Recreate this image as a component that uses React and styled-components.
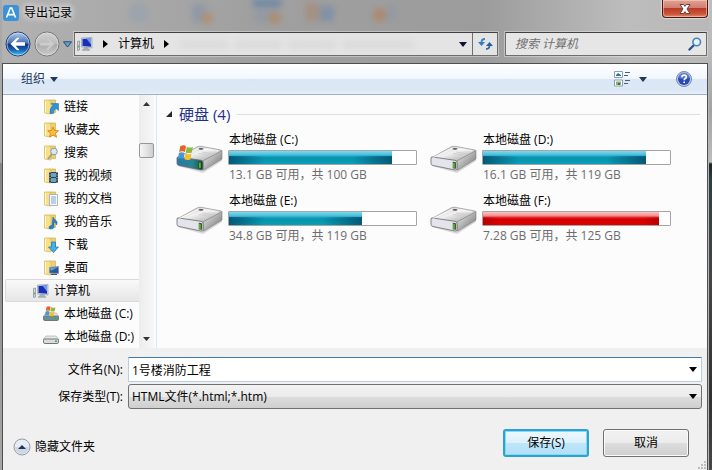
import React, { useState } from "react";
import styled, { createGlobalStyle } from "styled-components";

const GlobalStyle = createGlobalStyle`
  * {
    box-sizing: border-box;
  }

  body {
    margin: 0;
  }

  body,
  button,
  input,
  select {
    font-family: "Open Sans", "Noto Sans CJK SC", sans-serif;
    font-size: 12px;
    line-height: 16px;
    color: #000;
  }

  button {
    padding: 0;
    border: none;
    background: none;
  }

  svg {
    display: block;
    flex: none;
  }
`;

const Desktop = styled.div`
  position: relative;
  min-height: 100vh;
  display: flex;
  flex-direction: column;
  padding: 0 4px 0 2px;
  background:
    linear-gradient(#bcbcbc 0 50px, #a2a2a2 110px, #bdbdbd 162px, #1d2424 164px, #2b4040 180px, #454545 280px, #303030 400px, #474747) right / 3px 100% no-repeat,
    linear-gradient(#a9a9a9 0 162px, #858585 164px, #a6a6a6) left / 2px 100% no-repeat,
    linear-gradient(90deg, #b2b2b2, #a0a0a0 35%, #9c9c9c 68%, #bdbdbd 88%, #b8b8b8);
`;

const Glass = styled.svg`
  position: absolute;
  top: 0;
  left: 0;
  filter: blur(3px);
`;

const TitleBar = styled.header`
  position: relative;
  display: flex;
  align-items: flex-start;
  gap: 5px;
  height: 32px;
  padding: 5px 0 0 1px;
`;

const Title = styled.h1`
  flex: 1;
  margin: 0;
  font-size: 12px;
  font-weight: normal;
  text-shadow: 0 0 6px #fff, 0 0 8px #fff;
`;

const CloseButton = styled.button`
  width: 46px;
  height: 18px;
  margin-top: -5px;
  display: flex;
  align-items: center;
  justify-content: center;
  border: 1px solid #4c1712;
  border-top: none;
  border-radius: 0 0 4px 4px;
  background: linear-gradient(#e0a293, #d08070 45%, #b93c26 50%, #cb5238 80%, #e08a66);
  box-shadow: inset 0 0 0 1px rgba(255, 220, 205, 0.5), 0 0 1px 1px rgba(255, 255, 255, 0.5);
`;

const AddressRow = styled.div`
  position: relative;
  display: flex;
  gap: 7px;
  height: 31px;
  padding: 0 1px 7px 3px;
`;

const NavButtons = styled.div`
  display: flex;
  align-items: center;
  gap: 3px;
  width: 62px;
`;

const AddressBar = styled.nav`
  flex: 1;
  display: flex;
  align-items: center;
  padding-left: 2px;
  border: 1px solid #6e6e6e;
  border-top-color: #404040;
  background: #e4e4e4;
  box-shadow: 0 0 0 1px rgba(255, 255, 255, 0.35);
`;

const Trail = styled.div`
  display: flex;
  align-items: center;
  gap: 10px;
`;

const Crumb = styled.a`
  color: #000;
  text-decoration: none;
`;

const Smudges = styled.div`
  flex: 1;
  display: flex;
  gap: 8px;
  padding-left: 12px;
  filter: blur(3px);
`;

const Smudge = styled.span`
  width: ${(props) => props.$width}px;
  height: 7px;
  background: #d9d9d9;
`;

const RefreshButton = styled.button`
  width: 25px;
  height: 100%;
  margin-left: 5px;
  display: flex;
  align-items: center;
  justify-content: center;
  border-left: 1px solid #6e6e6e;
`;

const SearchBox = styled.div`
  width: 202px;
  display: flex;
  align-items: center;
  padding: 0 4px 0 9px;
  border: 1px solid #6e6e6e;
  border-top-color: #404040;
  background: #e6e6e6;
  box-shadow: 0 0 0 1px rgba(255, 255, 255, 0.35);
`;

const SearchInput = styled.input`
  flex: 1;
  min-width: 0;
  padding: 0;
  border: none;
  outline: none;
  background: none;

  &::placeholder {
    color: #6f6f6f;
    font-style: italic;
    opacity: 1;
  }
`;

const Body = styled.div`
  flex: 1;
  display: flex;
  flex-direction: column;
  border: 1px solid #4f4f4f;
  border-bottom: none;
  background: #f0f0f0;
`;

const Toolbar = styled.div`
  display: flex;
  align-items: center;
  height: 31px;
  padding: 0 15px 0 18px;
  border-bottom: 1px solid #a0afc3;
  background: linear-gradient(#fff, #f2f7fe 48%, #dce7f5 50%, #dde8f6 90%, #e8f0fa);
`;

const ToolButton = styled.button`
  display: flex;
  align-items: center;
  gap: ${(props) => props.$gap}px;
  margin-right: ${(props) => (props.$push ? "auto" : "29px")};
  color: #1e395b;
`;

const Explorer = styled.div`
  display: flex;
  background: #fcfcfc;
`;

const Sidebar = styled.ul`
  width: 136px;
  margin: 0;
  padding: 0;
  list-style: none;
  overflow: hidden;
`;

const TreeItem = styled.li`
  display: flex;
  align-items: center;
  gap: 5px;
  height: 23px;
  margin-left: 2px;
  padding-left: ${(props) => (props.$root ? 27 : 37)}px;
  border: 1px solid ${(props) => (props.$root ? "#dadada" : "transparent")};
  border-right: none;
  border-radius: 2px 0 0 2px;
  background: ${(props) => (props.$root ? "linear-gradient(#f9f9f9, #e6e6e6)" : "none")};
  white-space: nowrap;
`;

const ScrollTrack = styled.div`
  width: 18px;
  display: flex;
  flex-direction: column;
  align-items: center;
  padding: 7px 2px 7px 0;
  border-right: 1px solid #d9e8f3;
  background: linear-gradient(90deg, #ececec, #f6f6f6 14px, #fcfcfc 16px);
`;

const ScrollThumb = styled.div`
  width: 15px;
  height: 15px;
  margin: 37px 0 auto;
  border: 1px solid #979797;
  border-radius: 2px;
  background: linear-gradient(90deg, #f6f6f6, #e3e3e3 50%, #cfcfcf);
`;

const Main = styled.main`
  flex: 1;
  padding: 11px 7px 0 9px;
`;

const GroupHeader = styled.div`
  display: flex;
  align-items: center;
  gap: 7px;
  height: 16px;
`;

const GroupTitle = styled.h2`
  margin: 0;
  font-size: 15px;
  font-weight: normal;
  color: #1e3287;
`;

const GroupLine = styled.div`
  flex: 1;
  height: 1px;
  background: #dedede;
`;

const DriveGrid = styled.div`
  display: grid;
  grid-template-columns: repeat(auto-fill, 241px);
  gap: 10px 13px;
  padding: 10px 0 0 10px;
`;

const Drive = styled.div`
  display: flex;
  align-items: center;
  gap: 4px;
  height: 51px;
`;

const DriveInfo = styled.div`
  flex: 1;
  display: flex;
  flex-direction: column;
  gap: 2px;
  white-space: nowrap;
`;

const DriveName = styled.div`
  padding-left: 1px;
`;

const DriveSpace = styled.div`
  padding-left: 1px;
  color: #6d6d6d;
`;

const Meter = styled.div`
  height: 15px;
  border: 1px solid #a5a5a5;
  border-radius: 1px;
  background: #fff;
`;

const MeterFill = styled.div`
  height: 13px;
  background: ${(props) =>
    props.$full
      ? "linear-gradient(90deg, rgba(130, 0, 0, 0.35), transparent 16px calc(100% - 16px), rgba(130, 0, 0, 0.35)) 0 5px no-repeat, linear-gradient(#fbc4c4, #f28a8a 4px, #e23a3a 5px, #d80000 7px, #dc0000)"
      : "linear-gradient(90deg, rgba(0, 45, 80, 0.6), transparent 36px calc(100% - 40px), rgba(0, 45, 80, 0.6)) 0 5px no-repeat, linear-gradient(#7fd8ec, #45bdd9 4px, #23a7c4 5px, #0692ad 7px, #0aa0b8)"};
`;

const Footer = styled.form`
  position: relative;
  flex: 1;
  padding: 9px 5px 13px 15px;
`;

const Fields = styled.div`
  display: grid;
  grid-template-columns: 105px 1fr;
  align-items: center;
  gap: 2px 5px;
`;

const Label = styled.label`
  text-align: right;
`;

const Combo = styled.div`
  position: relative;
  display: flex;
  align-items: center;
  height: 25px;
  border: 1px solid ${(props) => (props.$select ? "#707070" : "#b5cfe7")};
  border-top-color: ${(props) => (props.$select ? "#707070" : "#3d7bad")};
  border-radius: ${(props) => (props.$select ? 3 : 1)}px;
  background: ${(props) =>
    props.$select ? "linear-gradient(#f2f2f2, #ebebeb 50%, #dddddd 50%, #cfcfcf)" : "#fff"};
`;

const FileInput = styled.input`
  flex: 1;
  min-width: 0;
  height: 100%;
  padding: 0 3px;
  border: none;
  outline: none;
  background: none;
`;

const TypeSelect = styled.select`
  flex: 1;
  min-width: 0;
  height: 100%;
  padding: 0 3px;
  border: none;
  outline: none;
  background: none;
  appearance: none;
`;

const ComboArrow = styled.span`
  position: absolute;
  right: 4px;
  pointer-events: none;
`;

const Actions = styled.div`
  display: flex;
  align-items: center;
  gap: 14px;
  padding: 20px 13px 0 0;
`;

const HideFolders = styled.button`
  display: flex;
  align-items: center;
  gap: 4px;
  margin: 8px auto 0 -5px;
`;

const PushButton = styled.button`
  width: 86px;
  height: 28px;
  border: ${(props) => (props.$primary ? "2px solid #2fa0cf" : "1px solid #707070")};
  border-radius: 3px;
  background: ${(props) =>
    props.$primary
      ? "linear-gradient(#eef8fd, #dcf1fc 50%, #bfe5fa 50%, #b0e0f8)"
      : "linear-gradient(#f2f2f2, #ebebeb 50%, #dddddd 50%, #cfcfcf)"};
  box-shadow: inset 0 0 0 1px ${(props) => (props.$primary ? "#7fdcf7" : "#fbfbfb")};
`;

const Grip = styled.svg`
  position: absolute;
  right: 1px;
  bottom: 1px;
`;

const Arrow = ({ color = "#000", right }) =>
  right ? (
    <svg width="5" height="8" viewBox="0 0 5 8">
      <path d="M0 0l5 4-5 4z" fill={color} />
    </svg>
  ) : (
    <svg width="8" height="5" viewBox="0 0 8 5">
      <path d="M0 0h8L4 5z" fill={color} />
    </svg>
  );

const AppLogo = () => (
  <svg width="16" height="16" viewBox="0 0 16 16">
    <rect width="16" height="16" rx="3" fill="#3a93d8" />
    <path d="M3.5 12.5L7.3 3h1.4l3.8 9.5M5 9.6h6" fill="none" stroke="#fff" strokeWidth="1.6" />
  </svg>
);

const CloseIcon = () => (
  <svg width="14" height="12" viewBox="0 0 14 12">
    <path
      d="M2 1.5h3.6L7 3.4l1.4-1.9H12L9 6l3 4.5H8.4L7 8.6l-1.4 1.9H2L5 6z"
      fill="#fff"
      stroke="#59463f"
    />
  </svg>
);

const BackIcon = () => (
  <svg width="26" height="26" viewBox="0 0 26 26">
    <defs>
      <linearGradient id="back" x2="0" y2="1">
        <stop offset="0" stopColor="#b7cdec" />
        <stop offset=".47" stopColor="#466fb4" />
        <stop offset=".5" stopColor="#0f3384" />
        <stop offset=".75" stopColor="#1762b6" />
        <stop offset="1" stopColor="#4ed0f8" />
      </linearGradient>
    </defs>
    <circle cx="13" cy="13" r="12" fill="url(#back)" stroke="#27406b" />
    <circle cx="13" cy="13" r="11" fill="none" stroke="#d4e6fa" strokeOpacity=".6" />
    <path d="M5.5 13l6.5-6.2h2.6l-3.9 4.5H20v3.4h-9.3l3.9 4.5H12z" fill="#fff" />
  </svg>
);

const ForwardIcon = () => (
  <svg width="26" height="26" viewBox="0 0 26 26">
    <defs>
      <linearGradient id="forward" x2="0" y2="1">
        <stop offset="0" stopColor="#d2d2d2" />
        <stop offset=".48" stopColor="#bcbcbc" />
        <stop offset=".5" stopColor="#a9a9a9" />
        <stop offset="1" stopColor="#cdcdcd" />
      </linearGradient>
    </defs>
    <circle cx="13" cy="13" r="12" fill="url(#forward)" stroke="#757575" />
    <circle cx="13" cy="13" r="11" fill="none" stroke="#e2e2e2" strokeOpacity=".7" />
    <path
      d="M20.5 13L14 6.800h-2.600l3.900 4.500H6v3.400h9.300l-3.900 4.500H14z"
      fill="#cdcdcd"
      stroke="#bababa"
      strokeWidth=".6"
    />
  </svg>
);

const HistoryIcon = () => (
  <svg width="9" height="7" viewBox="0 0 9 7">
    <path d="M.5.8h8L4.500 6z" fill="#5fa6d8" stroke="#234b73" />
  </svg>
);

const ComputerIcon = () => (
  <svg width="16" height="16" viewBox="0 0 16 16">
    <path d="M.5 5.500l2-.5v9l-2 .5z" fill="#d6dade" stroke="#7f8890" strokeWidth=".7" />
    <path d="M1 9.500h1v2H1z" fill="#57b838" />
    <path d="M7 11h4l1 2.500H6z" fill="#a8b0b8" />
    <path d="M5 13.500h8v1H5z" fill="#818b95" />
    <path d="M4.500 2l10.500-.5V12l-10.500-1z" fill="#cfd5dc" stroke="#8c97a5" strokeWidth=".6" />
    <path d="M5.500 3l8.500-.5v8.300l-8.500-.8z" fill="#1631b8" />
    <path d="M9.500 2.800l4.500-.3v6z" fill="#6f99f2" />
  </svg>
);

const RefreshIcon = () => (
  <svg width="15" height="14" viewBox="0 0 15 14">
    <path d="M7 2Q3.500 2 3.500 5.500" fill="none" stroke="#3187c4" strokeWidth="1.800" />
    <path d="M0 5h7L3.500 9z" fill="#2c7fbe" />
    <path d="M8 12q3.500 0 3.500-3.500" fill="none" stroke="#2d6ca8" strokeWidth="1.800" />
    <path d="M8 9h7L11.500 5z" fill="#245f9c" />
  </svg>
);

const SearchIcon = () => (
  <svg width="14" height="14" viewBox="0 0 14 14">
    <path d="M6 8l-4.500 4.500" stroke="#28538f" strokeWidth="2.400" strokeLinecap="round" />
    <circle cx="8.700" cy="5" r="3.800" fill="#e6f1f9" stroke="#4285bd" strokeWidth="1.600" />
  </svg>
);

const ViewIcon = () => (
  <svg width="17" height="16" viewBox="0 0 17 16">
    <path d="M.5.5h8v6h-8zM.5 9h8v6h-8z" fill="#fff" stroke="#8aa0b0" />
    <path d="M2 4l2-2 3 2v1H2z" fill="#2677a4" />
    <path d="M2 10.500h5V14H2z" fill="#8cb26a" />
    <path d="M4 12h2v2H4z" fill="#3e6f3b" />
    <path d="M11 1.500h5M10 4.500h4M11 9.500h5M10 12.500h4" stroke="#4c6078" />
  </svg>
);

const HelpIcon = () => (
  <svg width="16" height="16" viewBox="0 0 16 16">
    <circle cx="8" cy="8" r="7.500" fill="#c3cfe8" stroke="#7686ac" />
    <circle cx="8" cy="8" r="6" fill="#2848b4" />
    <path d="M2.500 7a5.500 5.500 0 0 1 11 0q-5 2-11 0z" fill="#6d8bda" opacity=".7" />
    <path
      d="M5.800 6.300q.1-2.200 2.300-2.200t2.200 1.900q0 1-1.200 1.700-.9.600-.9 1.500M8.200 10.400v1.700"
      fill="none"
      stroke="#fff"
      strokeWidth="1.600"
    />
  </svg>
);

const badges = {
  link: (
    <path
      d="M7 14.5q-.5-5.500 3-8L8 4.500h7.500v7L13 9.500q-2.500 1.500-2.500 5z"
      fill="#2b93d8"
      stroke="#1865a5"
      strokeWidth=".5"
    />
  ),
  star: (
    <path
      d="M10 5l1.500 3.500 4 .3-3 2.500 1 4-3.500-2.200L6.500 15l1-3.700-2.700-2.500 3.700-.3z"
      fill="#fbbd3c"
      stroke="#d67c16"
      strokeWidth=".8"
    />
  ),
  search: (
    <>
      <path d="M9 9l-4 5" stroke="#a29a8c" strokeWidth="1.800" />
      <circle cx="11" cy="6.500" r="3.300" fill="#dce9f1" stroke="#8d9aa4" />
    </>
  ),
  video: (
    <>
      <path d="M6 4h9v11H6z" fill="#35414f" />
      <path d="M8 5h5v4H8zM8 10h5v4H8z" fill="#64a5c6" />
      <path d="M7 4v11M14 4v11" stroke="#e2e2e2" strokeDasharray="1 1.500" strokeWidth=".9" />
    </>
  ),
  doc: (
    <>
      <path d="M6.500 3.500h8v11h-8z" fill="#f6f9fc" stroke="#95a8bb" strokeWidth=".8" />
      <path d="M8 6h5M8 8h5M8 10h5M8 12h5" stroke="#6b93c4" strokeWidth=".8" />
    </>
  ),
  music: (
    <path
      d="M10 3q.5 2.500 3 3.500 2 1.500.5 4.500 0-2.500-2.500-3v5q-.5 2-3 2t-2-2q.5-1.500 3-1.500z"
      fill="#2285d2"
      stroke="#175b9b"
      strokeWidth=".5"
    />
  ),
  download: (
    <path d="M8.500 5h4v5h3l-5 5.500L5.500 10h3z" fill="#40b1ed" stroke="#1b72ab" strokeWidth=".7" />
  ),
  desktop: (
    <>
      <path d="M6.500 7.500l9-1v7l-9-.5z" fill="#27599b" stroke="#7f94ab" strokeWidth=".8" />
      <path d="M7 8l8-1-7 4z" fill="#649fd7" />
      <path d="M8 14.500h6" stroke="#48566a" />
    </>
  ),
};

const FolderIcon = ({ badge }) => (
  <svg width="16" height="16" viewBox="0 0 16 16">
    <path d="M6 1h6.500v12.500H6z" fill="#ecd074" stroke="#d2b04c" strokeWidth=".7" />
    <path d="M1.500 1H6l2 1.500V15l-6.500-1z" fill="#f7e08c" stroke="#d6b552" strokeWidth=".7" />
    <path d="M2.500 2v11.500" stroke="#fff8d2" />
    {badges[badge]}
  </svg>
);

const Flag = ({ transform }) => (
  <g transform={transform}>
    <path d="M2 1q3-1.500 5 0L6 6Q4 5 1 6z" fill="#e5622b" />
    <path d="M7.700 1.500q3 1.500 5.300 0l-1 5q-3 1-5.300-.3z" fill="#8cbb3c" />
    <path d="M.8 6.800q3-1 5 .2l-1 5Q2.500 11 0 12z" fill="#4798d5" />
    <path d="M6.500 7.200q3 1.300 5.300.3l-1 5q-3 1-5.300-.3z" fill="#f6bd31" />
  </g>
);

const SmallDriveIcon = ({ system }) => (
  <svg width="16" height="16" viewBox="0 0 16 16">
    <path d="M3 7h10l3 3.500H0z" fill="#e6e8e8" stroke="#9ea3a4" strokeWidth=".6" />
    <rect x=".5" y="10" width="15" height="4.500" rx="1.300" fill={system ? "#6a9196" : "#d9dcdc"} stroke="#717879" />
    <path d="M12 11.500h2V13h-2z" fill="#42aa37" />
    {system && <Flag transform="translate(2) scale(.8)" />}
  </svg>
);

const DriveIcon = ({ system }) => (
  <svg width="48" height="32" viewBox="0 0 48 32">
    <defs>
      <linearGradient id="driveTop" x2="1" y2="1">
        <stop offset="0" stopColor="#bcbcbc" />
        <stop offset=".45" stopColor="#f1f1f1" />
        <stop offset="1" stopColor="#9b9b9b" />
      </linearGradient>
      <linearGradient id="driveSide" x2="1" y2="1">
        <stop offset="0" stopColor="#f4f4f4" />
        <stop offset="1" stopColor="#696969" />
      </linearGradient>
      <linearGradient id="driveFront" x2="1">
        <stop offset="0" stopColor="#2879a8" />
        <stop offset=".6" stopColor="#2a8490" />
        <stop offset="1" stopColor="#165343" />
      </linearGradient>
    </defs>
    <path d="M2 24l25 7 19-12v-5z" fill="#999" opacity=".35" />
    <path
      d="M1 16L21 5q2-1 4-.7L45 8q1.500.5 0 1.500L27 19z"
      fill="url(#driveTop)"
      stroke="#909090"
      strokeWidth=".7"
    />
    <path
      d="M27 19L46 8.500V17L28 28q-1 .5-1-1z"
      fill="url(#driveSide)"
      stroke="#828282"
      strokeWidth=".6"
    />
    <path
      d="M1 16q0-1.500 2-1l22 3.300q2 .5 2 2.200v6q0 2-2 1.500L3 23.500q-2-.5-2-2z"
      fill={system ? "url(#driveFront)" : "#e3e4ec"}
      stroke="#6b6b6b"
      strokeWidth=".8"
    />
    <path d="M3 15.500L22 6.500l20 2.500" fill="none" stroke="#fff" strokeOpacity=".7" />
    <ellipse cx="25" cy="6.800" rx="2.500" ry=".9" fill="#555" />
    <path d="M23 11.500l12 2M26 10l11 1.800" stroke="#c9c9c9" strokeWidth=".8" />
    <path d="M22.800 19.800l3 .5v6.500l-3-.6z" fill="#173a18" />
    <path d="M23.300 20.500l1.300.2v5.200l-1.300-.2z" fill="#80e62f" />
    {system && <Flag transform="translate(2 3) scale(1.150)" />}
  </svg>
);

const HideIcon = () => (
  <svg width="18" height="18" viewBox="0 0 18 18">
    <circle cx="9" cy="9" r="8" fill="#e6ecf3" stroke="#929daa" />
    <path d="M2 9a7 7 0 0 0 14 0z" fill="#cdd8e5" />
    <path d="M5 11l4-4 4 4z" fill="#1f3656" />
  </svg>
);

const folders = [
  { name: "链接", badge: "link" },
  { name: "收藏夹", badge: "star" },
  { name: "搜索", badge: "search" },
  { name: "我的视频", badge: "video" },
  { name: "我的文档", badge: "doc" },
  { name: "我的音乐", badge: "music" },
  { name: "下载", badge: "download" },
  { name: "桌面", badge: "desktop" },
];

const drives = [
  { letter: "C", free: "13.1", total: 100, used: 87, system: true },
  { letter: "D", free: "16.1", total: 119, used: 87 },
  { letter: "E", free: "34.8", total: 119, used: 71 },
  { letter: "F", free: "7.28", total: 125, used: 94 },
];

const App = () => {
  const [fileName, setFileName] = useState("1号楼消防工程");

  return (
    <>
      <GlobalStyle />
      <Desktop>
        {/* blurred toolbar icons behind the glass frame */}
        <Glass width="420" height="30" opacity=".75">
          <path d="M253 0h28v6h-28z" fill="#4f7ba5" />
          <path d="M254 8h24v15h-24z" fill="#9298a4" />
          <circle cx="275" cy="18" r="6" fill="#b3855f" />
          <path d="M305 3h14v18h-14z" fill="#a58d7c" />
          <path d="M320 6h14v15h-14z" fill="#778caa" />
          <circle cx="380" cy="15" r="7" fill="#b08263" />
          <path d="M388 4h8v18h-8z" fill="#8e99a6" />
          <circle cx="139" cy="13" r="10" fill="#98a2ae" />
          <path d="M192 4h14v18h-14z" fill="#8995aa" />
          <circle cx="207" cy="18" r="6" fill="#b38a66" />
        </Glass>

        <TitleBar>
          <AppLogo />
          <Title>导出记录</Title>
          <CloseButton aria-label="关闭">
            <CloseIcon />
          </CloseButton>
        </TitleBar>

        <AddressRow>
          <NavButtons>
            <button aria-label="后退">
              <BackIcon />
            </button>
            <button aria-label="前进">
              <ForwardIcon />
            </button>
            <button aria-label="最近位置">
              <HistoryIcon />
            </button>
          </NavButtons>
          <AddressBar>
            <Trail>
              <ComputerIcon />
              <Arrow right />
              <Crumb href="#computer">计算机</Crumb>
              <Arrow right />
            </Trail>
            <Smudges>
              <Smudge $width={46} />
              <Smudge $width={46} />
              <Smudge $width={46} />
              <Smudge $width={70} />
            </Smudges>
            <Arrow color="#101038" />
            <RefreshButton aria-label="刷新">
              <RefreshIcon />
            </RefreshButton>
          </AddressBar>
          <SearchBox>
            <SearchInput aria-label="搜索" placeholder="搜索 计算机" />
            <SearchIcon />
          </SearchBox>
        </AddressRow>

        <Body>
          <Toolbar>
            <ToolButton $push $gap={5}>
              组织
              <Arrow color="#1e395b" />
            </ToolButton>
            <ToolButton $gap={8} aria-label="视图">
              <ViewIcon />
              <Arrow color="#1e395b" />
            </ToolButton>
            <button aria-label="帮助">
              <HelpIcon />
            </button>
          </Toolbar>

          <Explorer>
            <Sidebar>
              {folders.map((folder) => (
                <TreeItem key={folder.name}>
                  <FolderIcon badge={folder.badge} />
                  {folder.name}
                </TreeItem>
              ))}
              <TreeItem $root>
                <ComputerIcon />
                计算机
              </TreeItem>
              <TreeItem>
                <SmallDriveIcon system />
                本地磁盘 (C:)
              </TreeItem>
              <TreeItem>
                <SmallDriveIcon />
                本地磁盘 (D:)
              </TreeItem>
            </Sidebar>
            <ScrollTrack>
              <svg width="7" height="4" viewBox="0 0 7 4">
                <path d="M0 4l3.500-4L7 4z" fill="#333" />
              </svg>
              <ScrollThumb />
              <svg width="7" height="4" viewBox="0 0 7 4">
                <path d="M0 0h7L3.500 4z" fill="#333" />
              </svg>
            </ScrollTrack>

            <Main>
              <GroupHeader>
                <svg width="6" height="6" viewBox="0 0 6 6">
                  <path d="M6 0v6H0z" fill="#262626" />
                </svg>
                <GroupTitle>硬盘 (4)</GroupTitle>
                <GroupLine />
              </GroupHeader>
              <DriveGrid>
                {drives.map((drive) => (
                  <Drive key={drive.letter}>
                    <DriveIcon system={drive.system} />
                    <DriveInfo>
                      <DriveName>本地磁盘 ({drive.letter}:)</DriveName>
                      <Meter>
                        <MeterFill $full={drive.used > 90} style={{ width: `${drive.used}%` }} />
                      </Meter>
                      <DriveSpace>
                        {drive.free} GB 可用，共 {drive.total} GB
                      </DriveSpace>
                    </DriveInfo>
                  </Drive>
                ))}
              </DriveGrid>
            </Main>
          </Explorer>

          <Footer onSubmit={(event) => event.preventDefault()}>
            <Fields>
              <Label htmlFor="fileName">文件名(N):</Label>
              <Combo>
                <FileInput
                  id="fileName"
                  value={fileName}
                  onChange={(event) => setFileName(event.target.value)}
                />
                <ComboArrow>
                  <Arrow />
                </ComboArrow>
              </Combo>
              <Label htmlFor="fileType">保存类型(T):</Label>
              <Combo $select>
                <TypeSelect id="fileType">
                  <option>HTML文件(*.html;*.htm)</option>
                </TypeSelect>
                <ComboArrow>
                  <Arrow />
                </ComboArrow>
              </Combo>
            </Fields>
            <Actions>
              <HideFolders type="button">
                <HideIcon />
                隐藏文件夹
              </HideFolders>
              <PushButton type="submit" $primary>
                保存(S)
              </PushButton>
              <PushButton type="button">取消</PushButton>
            </Actions>
            <Grip width="9" height="9" viewBox="0 0 9 9">
              <path d="M7 1h2v2H7zM4 4h2v2H4zM7 4h2v2H7zM1 7h2v2H1zM4 7h2v2H4zM7 7h2v2H7z" fill="#bdbdbd" />
            </Grip>
          </Footer>
        </Body>
      </Desktop>
    </>
  );
};

export default App;
